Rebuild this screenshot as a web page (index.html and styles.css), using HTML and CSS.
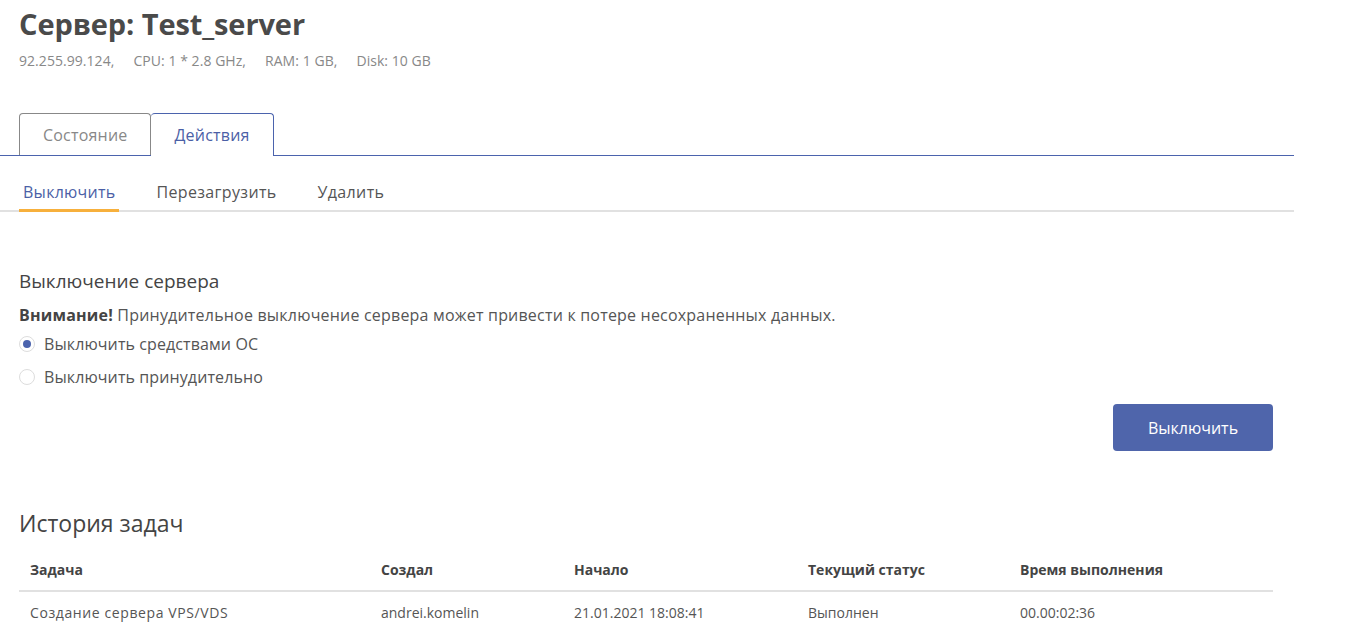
FILE: index.html
```
<!DOCTYPE html>
<html lang="ru">
<head>
<meta charset="utf-8">
<title>Сервер: Test_server</title>
<link rel="stylesheet" href="styles.css">
</head>
<body>
<div class="page">
  <header class="head">
    <h1 class="title">Сервер: Test_server</h1>
    <div class="specs">
      <span>92.255.99.124,</span>
      <span>CPU: 1 * 2.8 GHz,</span>
      <span>RAM: 1 GB,</span>
      <span>Disk: 10 GB</span>
    </div>
  </header>

  <nav class="tabs">
    <div class="tab">Состояние</div>
    <div class="tab tab-active">Действия</div>
  </nav>

  <nav class="subtabs">
    <div class="subtab subtab-active">Выключить</div>
    <div class="subtab">Перезагрузить</div>
    <div class="subtab">Удалить</div>
  </nav>

  <section class="content">
    <h2 class="section-title">Выключение сервера</h2>
    <p class="warning"><b>Внимание!</b> Принудительное выключение сервера может привести к потере несохраненных данных.</p>
    <div class="radios">
      <label class="radio"><span class="dot dot-on"></span>Выключить средствами ОС</label>
      <label class="radio"><span class="dot"></span>Выключить принудительно</label>
    </div>
    <div class="actions">
      <button class="btn">Выключить</button>
    </div>

    <h2 class="history-title">История задач</h2>
    <table class="table">
      <thead>
        <tr>
          <th class="c1">Задача</th>
          <th class="c2">Создал</th>
          <th class="c3">Начало</th>
          <th class="c4">Текущий статус</th>
          <th class="c5">Время выполнения</th>
        </tr>
      </thead>
      <tbody>
        <tr>
          <td class="cyr">Создание сервера VPS/VDS</td>
          <td>andrei.komelin</td>
          <td>21.01.2021 18:08:41</td>
          <td>Выполнен</td>
          <td>00.00:02:36</td>
        </tr>
      </tbody>
    </table>
  </section>
</div>
</body>
</html>
```

FILE: styles.css
```
* { box-sizing: border-box; }
body {
  margin: 0;
  background: #fff;
  font-family: "Open Sans", "Noto Sans", sans-serif;
  color: #555;
}
.page { width: 1294px; }

.head { padding: 7px 19px 0; }
.title {
  margin: 0;
  font-size: 29px;
  line-height: 34px;
  font-weight: 700;
  color: #4a4a4a;
  letter-spacing: -0.1px;
}
.specs {
  display: flex;
  gap: 19px;
  margin-top: 10px;
  font-size: 14px;
  line-height: 20px;
  color: #888;
  letter-spacing: 0.05px;
}

.tabs {
  display: flex;
  margin-top: 42px;
  padding-left: 19px;
  border-bottom: 1px solid #4b63ad;
}
.tab {
  height: 42px;
  padding: 0 23px;
  display: flex;
  align-items: center;
  font-size: 16px;
  color: #888;
  border: 1px solid #888;
  border-bottom: none;
  border-radius: 4px 4px 0 0;
  letter-spacing: 0.2px;
}
.tab-active {
  color: #4b5fa6;
  border-color: #4b63ad;
  background: #fff;
  margin-bottom: -1px;
  height: 43px;
  padding: 0 23px 0 23px;
  border-left: none;
}

.subtabs {
  display: flex;
  gap: 33px;
  margin-top: 23px;
  padding-left: 19px;
  border-bottom: 2px solid #e1e1e1;
}
.subtab {
  padding: 0 4px;
  height: 33px;
  font-size: 16px;
  line-height: 26px;
  color: #555;
  margin-bottom: -2px;
  border-bottom: 3px solid transparent;
  letter-spacing: 0.35px;
}
.subtab-active {
  color: #4b5fa6;
  border-bottom-color: #f7b03c;
  letter-spacing: 0.25px;
}

.content { padding: 55px 21px 0 19px; }
.section-title {
  margin: 0;
  font-size: 19px;
  line-height: 28px;
  font-weight: 400;
  color: #444;
}
.warning {
  margin: 8px 0 0;
  font-size: 16px;
  line-height: 24px;
  color: #555;
  letter-spacing: 0.2px;
}
.warning b { color: #444; font-weight: 700; }
.radios { display: flex; flex-direction: column; gap: 9px; margin-top: 5px; }
.radio {
  display: flex;
  align-items: center;
  gap: 9px;
  font-size: 16px;
  line-height: 24px;
  color: #555;
  letter-spacing: 0.1px;
}
.dot {
  width: 16px;
  height: 16px;
  border-radius: 50%;
  border: 1px solid #ddd;
  display: flex;
  align-items: center;
  justify-content: center;
}
.dot-on::after {
  content: "";
  width: 8px;
  height: 8px;
  border-radius: 50%;
  background: #4b63ad;
}
.actions { display: flex; justify-content: flex-end; margin-top: 15px; }
.btn {
  width: 160px;
  height: 47px;
  border: none;
  border-radius: 4px;
  background: #4f65ab;
  color: #fff;
  font-family: inherit;
  font-size: 16px;
}

.history-title {
  margin: 56px 0 0;
  font-size: 23px;
  line-height: 32px;
  font-weight: 400;
  color: #444;
}
.table {
  width: 100%;
  border-collapse: collapse;
  margin-top: 13px;
  font-size: 14px;
}
.table th {
  text-align: left;
  font-weight: 700;
  color: #444;
  padding: 8px 11px 10px;
  border-bottom: 2px solid #e1e1e1;
  line-height: 20px;
}
.table td {
  padding: 11px 11px 10px;
  line-height: 20px;
  color: #555;
}
.table td.cyr { letter-spacing: 0.6px; }
.c1 { width: 351px; }
.c2 { width: 193px; }
.c3 { width: 234px; }
.c4 { width: 212px; }
```
